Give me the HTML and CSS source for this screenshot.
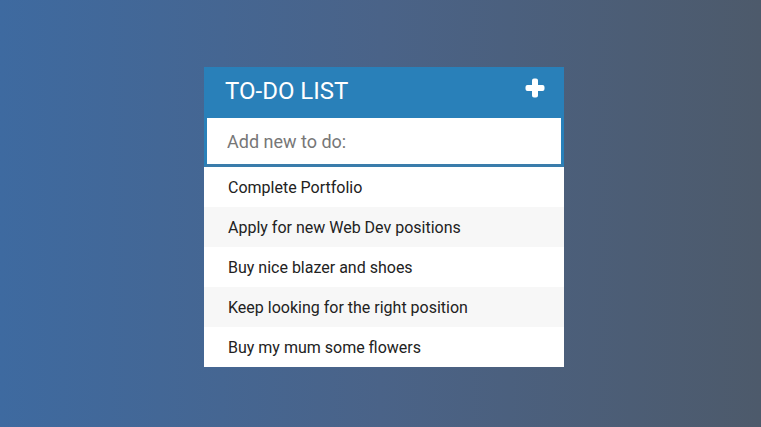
FILE: index.html
```html
<!DOCTYPE html>
<html lang="en">
<head>
<meta charset="utf-8">
<title>To-Do List</title>
<link rel="stylesheet" href="styles.css">
</head>
<body>
<div class="container">
  <h1 class="title">To-Do List
    <svg class="plus" viewBox="0 0 20 20" width="20" height="20" aria-hidden="true">
      <path d="M7 2.5 Q7 0.5 9 0.5 H11 Q13 0.5 13 2.5 V7 H17.5 Q19.5 7 19.5 9 V11 Q19.5 13 17.5 13 H13 V17.5 Q13 19.5 11 19.5 H9 Q7 19.5 7 17.5 V13 H2.5 Q0.5 13 0.5 11 V9 Q0.5 7 2.5 7 H7 Z" fill="#fff"/>
    </svg>
  </h1>
  <input class="new-todo" type="text" placeholder="Add new to do:" autofocus>
  <ul class="todos">
    <li class="todo">Complete Portfolio</li>
    <li class="todo">Apply for new Web Dev positions</li>
    <li class="todo">Buy nice blazer and shoes</li>
    <li class="todo">Keep looking for the right position</li>
    <li class="todo">Buy my mum some flowers</li>
  </ul>
</div>
</body>
</html>
```
FILE: styles.css
```css
html, body {
  margin: 0;
  height: 100%;
}
body {
  font-family: Roboto, "Liberation Sans", sans-serif;
  background: linear-gradient(90deg, #3e6aa0 0%, #4a6388 50%, #4d5a6b 100%);
  display: flex;
  justify-content: center;
  padding-left: 7px;
  box-sizing: border-box;
}
.container {
  width: 360px;
  margin-top: 67px;
  align-self: flex-start;
  background: #fff;
}
.title {
  margin: 0;
  height: 48px;
  box-sizing: border-box;
  padding: 0 20px 0 21px;
  background: #2980b9;
  color: #fff;
  font-size: 24px;
  font-weight: 400;
  text-transform: uppercase;
  display: flex;
  align-items: center;
  justify-content: space-between;
}
.plus {
  display: block;
  margin-right: -1px;
  margin-bottom: 7px;
}
.new-todo {
  display: block;
  width: 100%;
  height: 52px;
  box-sizing: border-box;
  margin: 0;
  padding: 0 13px 0 20px;
  font-family: Roboto, "Liberation Sans", sans-serif;
  font-size: 18px;
  color: #555;
  background: #fff;
  border: 3px solid #2980b9;
  border-bottom-color: #3a7cab;
  outline: none;
  caret-color: #555;
}
.new-todo::placeholder {
  color: #777;
}
.todos {
  list-style: none;
  margin: 0;
  padding: 0;
}
.todo {
  height: 40px;
  box-sizing: border-box;
  padding: 2px 0 0 24px;
  line-height: 38px;
  font-size: 16px;
  color: #222;
  background: #fff;
}
.todo:nth-child(2n) {
  background: #f7f7f7;
}
```
